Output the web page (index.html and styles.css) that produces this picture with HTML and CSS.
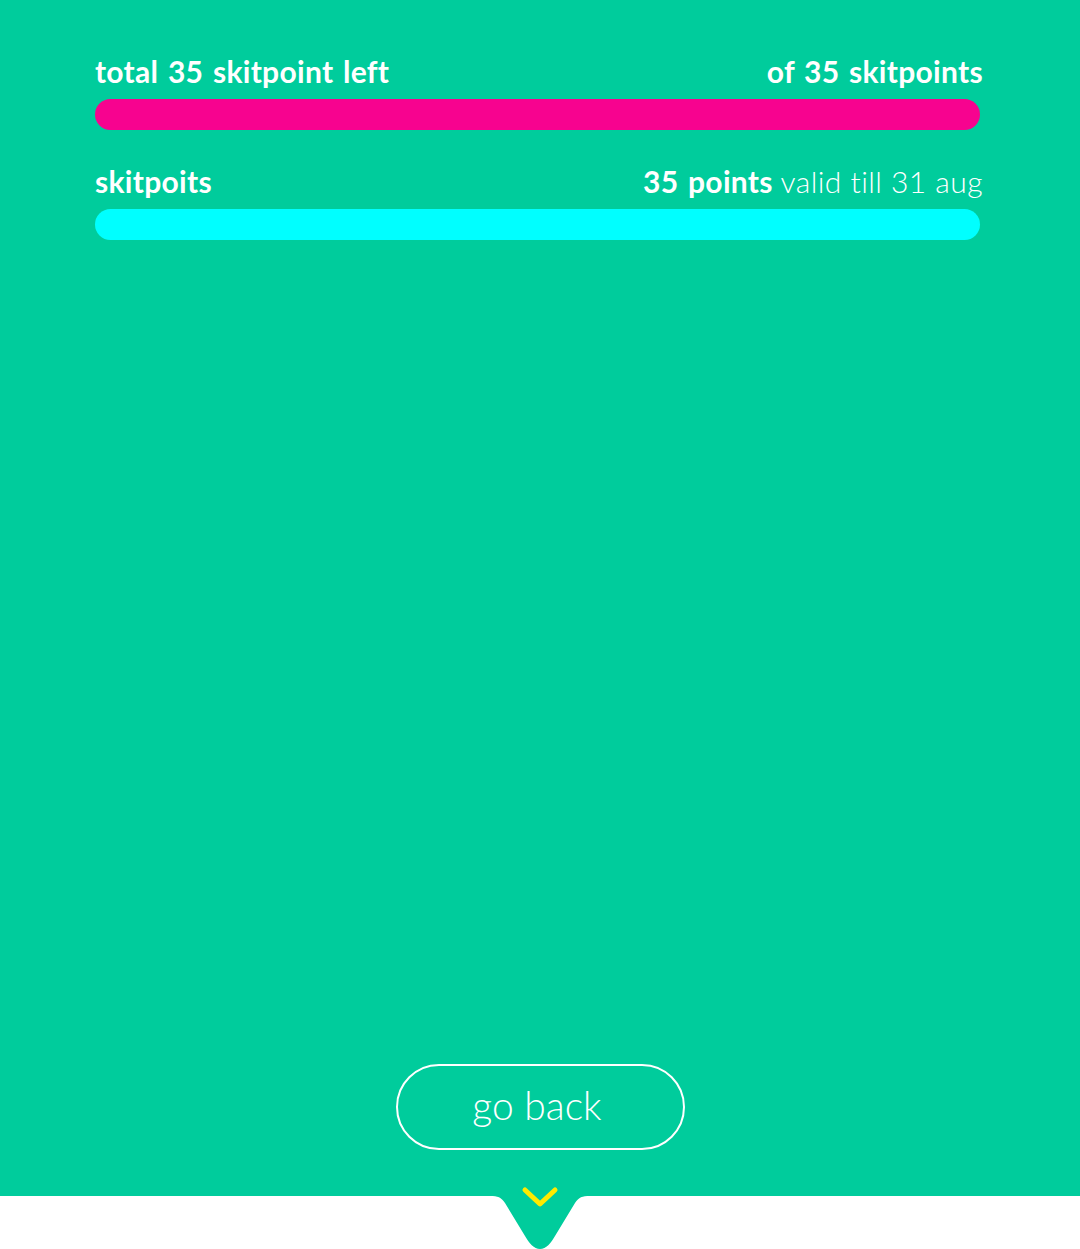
FILE: index.html
```html
<!DOCTYPE html>
<html lang="en">
<head>
<meta charset="utf-8">
<title>skitpoints</title>
<link rel="stylesheet" href="styles.css">
</head>
<body>
<main class="screen">
  <section class="meters">
    <div class="meter">
      <div class="meter-labels">
        <span class="strong">total 35 skitpoint left</span>
        <span class="strong">of 35 skitpoints</span>
      </div>
      <div class="bar bar-pink"></div>
    </div>
    <div class="meter">
      <div class="meter-labels">
        <span class="strong">skitpoits</span>
        <span><span class="strong">35 points</span> <span class="light">valid till 31 aug</span></span>
      </div>
      <div class="bar bar-cyan"></div>
    </div>
  </section>
  <div class="actions">
    <button class="back-btn" type="button">go back</button>
  </div>
</main>
<footer class="footer">
  <svg class="notch" width="100" height="54" viewBox="0 0 100 54" aria-hidden="true">
    <path d="M0,0 C8,0 11,1 15,7 L35,40 C39,47 44,53 50,53 C56,53 61,47 65,40 L85,7 C89,1 92,0 100,0 Z" fill="#00cc9c"/>
    <polyline points="35,-6 50,8 65,-6" fill="none" stroke="#ffea00" stroke-width="5" stroke-linecap="round" stroke-linejoin="round"/>
  </svg>
</footer>
</body>
</html>
```

FILE: styles.css
```css
* { box-sizing: border-box; }
html, body { margin: 0; padding: 0; }
body {
  width: 1080px;
  height: 1249px;
  overflow: hidden;
  background: #ffffff;
  font-family: "Lato", "Noto Sans", sans-serif;
  color: #ffffff;
}
.screen {
  height: 1196px;
  background: #00cc9c;
  display: flex;
  flex-direction: column;
  padding: 52px 100px 46px 95px;
}
.meters {
  display: flex;
  flex-direction: column;
  gap: 32px;
  flex: 1;
}
.meter {
  display: flex;
  flex-direction: column;
  gap: 9px;
}
.meter-labels {
  display: flex;
  justify-content: space-between;
  align-items: baseline;
  font-size: 30px;
  line-height: 38px;
  margin-right: -3px;
}
.strong { font-weight: 700; letter-spacing: 0.3px; word-spacing: 2px; }
.light { font-weight: 300; letter-spacing: 0.45px; }
.bar {
  height: 31px;
  border-radius: 16px;
}
.bar-pink { background: #f7038f; }
.bar-cyan { background: #00ffff; }
.actions {
  display: flex;
  justify-content: center;
  padding-left: 5px;
}
.back-btn {
  width: 289px;
  height: 86px;
  border: 2px solid #ffffff;
  border-radius: 43px;
  background: transparent;
  color: #ffffff;
  font-family: "Lato", "Noto Sans", sans-serif;
  font-weight: 300;
  font-size: 39px;
  padding: 0 6px 4px 0;
}
.footer {
  position: relative;
  height: 53px;
}
.notch {
  position: absolute;
  left: 490px;
  top: 0;
  overflow: visible;
}
```
